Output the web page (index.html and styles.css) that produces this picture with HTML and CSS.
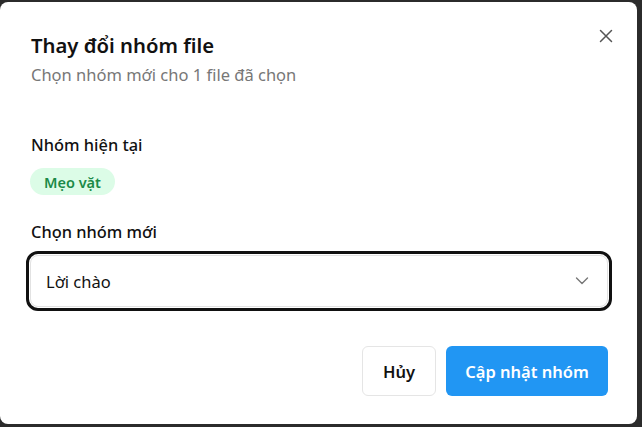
FILE: index.html
```html
<!DOCTYPE html>
<html lang="vi">
<head>
<meta charset="utf-8">
<title>Thay đổi nhóm file</title>
<link rel="stylesheet" href="styles.css">
</head>
<body>
<div class="dialog">
  <button class="close" aria-label="Đóng">
    <svg width="14" height="14" viewBox="0 0 14 14"><path d="M1.5 1.5 L12.5 12.5 M12.5 1.5 L1.5 12.5" stroke="#555" stroke-width="1.5" fill="none" stroke-linecap="round"/></svg>
  </button>
  <h1 class="title">Thay đổi nhóm file</h1>
  <p class="subtitle">Chọn nhóm mới cho 1 file đã chọn</p>

  <div class="label first">Nhóm hiện tại</div>
  <span class="badge">Mẹo vặt</span>

  <div class="label second">Chọn nhóm mới</div>
  <div class="select">
    <span>Lời chào</span>
    <svg width="14" height="8" viewBox="0 0 14 8"><path d="M1.5 1 L7 6.5 L12.5 1" stroke="#777" stroke-width="1.4" fill="none" stroke-linecap="round" stroke-linejoin="round"/></svg>
  </div>

  <div class="actions">
    <button class="btn cancel">Hủy</button>
    <button class="btn primary">Cập nhật nhóm</button>
  </div>
</div>
</body>
</html>
```
FILE: styles.css
```css
html, body {
  margin: 0;
  height: 100%;
  overflow: hidden;
}
body {
  background: #2b2b2b;
  font-family: "Noto Sans", "Open Sans", sans-serif;
  color: #111;
}
.dialog {
  position: relative;
  box-sizing: border-box;
  margin-top: 2px;
  width: 637px;
  height: 422px;
  background: #fff;
  border-radius: 8px;
  padding: 29px 29px 0 30px;
  display: flex;
  flex-direction: column;
  align-items: flex-start;
}
.close {
  position: absolute;
  top: 25px;
  right: 22px;
  width: 18px;
  height: 18px;
  padding: 0;
  border: 0;
  background: none;
  display: flex;
  align-items: center;
  justify-content: center;
}
.title {
  margin: 0 0 0 1px;
  font-size: 20.3px;
  line-height: 28px;
  font-weight: 600;
  color: #111;
}
.subtitle {
  margin: 4px 0 0 1px;
  font-size: 16.5px;
  line-height: 24px;
  color: #777;
}
.label {
  margin-left: 1px;
  font-size: 16.4px;
  line-height: 24px;
  font-weight: 500;
  color: #111;
}
.label.first { margin-top: 46px; }
.label.second { margin-top: 25px; }
.badge {
  margin-top: 11px;
  height: 27px;
  box-sizing: border-box;
  padding: 0 14px;
  border-radius: 14px;
  background: #dcfce7;
  color: #1b8a47;
  font-size: 14.5px;
  font-weight: 600;
  display: flex;
  align-items: center;
}
.select {
  margin-top: 11px;
  align-self: stretch;
  height: 52px;
  box-sizing: border-box;
  border: 1px solid #e2e2e2;
  border-radius: 8px;
  outline: 3px solid #111;
  outline-offset: 1px;
  padding: 0 18px 0 15px;
  display: flex;
  align-items: center;
  justify-content: space-between;
  font-size: 16.5px;
  color: #111;
}
.actions {
  margin-top: 39px;
  align-self: stretch;
  display: flex;
  justify-content: flex-end;
  gap: 10px;
}
.btn {
  height: 50px;
  box-sizing: border-box;
  border-radius: 6px;
  font-family: inherit;
  font-size: 16.5px;
  font-weight: 600;
  padding: 0;
  white-space: nowrap;
}
.cancel {
  background: #fff;
  border: 1px solid #e5e5e5;
  color: #111;
  width: 74px;
}
.primary {
  background: #2196f3;
  border: 0;
  color: #fff;
  width: 162px;
}
```
